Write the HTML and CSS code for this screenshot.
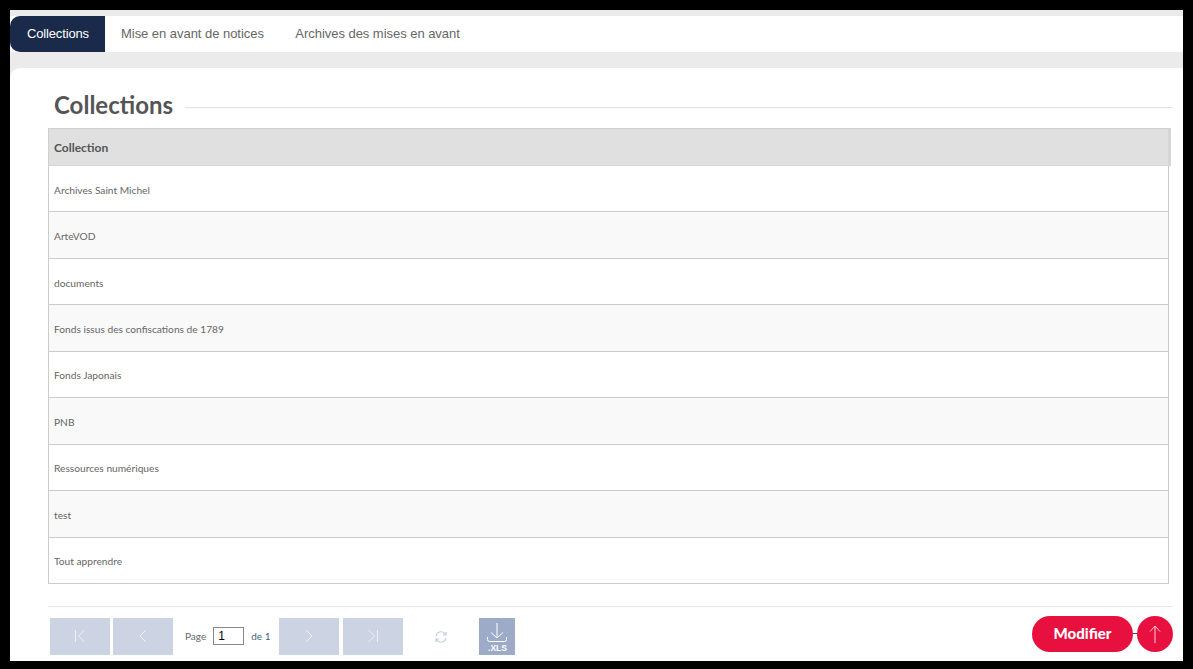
FILE: index.html
```html
<!DOCTYPE html>
<html lang="fr">
<head>
  <meta charset="UTF-8">
  <title>Collections</title>
  <link rel="stylesheet" href="styles.css">
</head>
<body>
  <div class="frame">
    <!-- onglets -->
    <nav class="tabs">
      <a class="tab active">Collections</a>
      <a class="tab">Mise en avant de notices</a>
      <a class="tab">Archives des mises en avant</a>
    </nav>

    <main class="card">
      <div class="title-row">
        <h1>Collections</h1>
        <span class="title-line"></span>
      </div>

      <div class="grid-head"><span>Collection</span></div>
      <div class="grid-body">
        <div class="grid-row">Archives Saint Michel</div>
        <div class="grid-row">ArteVOD</div>
        <div class="grid-row">documents</div>
        <div class="grid-row">Fonds issus des confiscations de 1789</div>
        <div class="grid-row">Fonds Japonais</div>
        <div class="grid-row">PNB</div>
        <div class="grid-row">Ressources numériques</div>
        <div class="grid-row">test</div>
        <div class="grid-row">Tout apprendre</div>
      </div>

      <!-- pagination -->
      <div class="pager">
        <button class="page-btn">
          <svg width="12" height="14" viewBox="0 0 12 14"><path d="M1.500 1v12M10.500 1l-6 6 6 6"/></svg>
        </button>
        <button class="page-btn">
          <svg width="8" height="14" viewBox="0 0 8 14"><path d="M7 1L1 7l6 6"/></svg>
        </button>
        <span class="page-label">Page</span>
        <input class="page-input" type="text" value="1">
        <span class="page-total">de 1</span>
        <button class="page-btn">
          <svg width="8" height="14" viewBox="0 0 8 14"><path d="M1 1l6 6-6 6"/></svg>
        </button>
        <button class="page-btn last">
          <svg width="12" height="14" viewBox="0 0 12 14"><path d="M10.500 1v12M1.500 1l6 6-6 6"/></svg>
        </button>
        <svg class="refresh" width="12" height="12" viewBox="0 0 12 12"><path d="M1 5a5 5 0 0 1 8.600-2.600L11 4M11 1v3H8M11 7a5 5 0 0 1-8.600 2.600L1 8M1 11V8h3"/></svg>
        <button class="xls">
          <svg width="20" height="20" viewBox="0 0 20 20"><path d="M10 0v15M4 9.500l6 5.500 6-5.500M.5 14v2.500a2 2 0 0 0 2 2h15a2 2 0 0 0 2-2V14"/></svg>
          <span>.XLS</span>
        </button>
        <div class="actions">
          <button class="modify">Modifier</button>
          <span class="dash"></span>
          <button class="to-top">
            <svg width="12" height="18" viewBox="0 0 12 18"><path d="M6 18V1M1 6.500L6 1l5 5.500"/></svg>
          </button>
        </div>
      </div>
    </main>
  </div>
</body>
</html>
```

FILE: styles.css
```css
/* commun */
html,
body {
  margin: 0;
  padding: 0;
  height: 100%;
  background-color: #000;
  overflow: hidden;
}

body {
  padding: 10px 10px 8px;
  box-sizing: border-box;
  font-family: "Lato", "Liberation Sans", sans-serif;
  color: #666;
}

.frame {
  height: 651px;
  padding-top: 6px;
  box-sizing: border-box;
  background-color: #ebebeb;
  overflow: hidden;
}

/* onglets */
.tabs {
  display: flex;
  height: 36px;
  background-color: #fff;
  font-family: "Liberation Sans", sans-serif;
  font-size: 13px;
  letter-spacing: -0.04px;
}

.tab {
  display: flex;
  align-items: center;
  padding: 0 15.500px 2px 16px;
  color: #666;
}

.tab.active {
  width: 95px;
  box-sizing: border-box;
  padding: 0 0 2px 17px;
  border-radius: 10px 0 0 10px;
  background-color: #1a2a4a;
  color: #fff;
  letter-spacing: -0.15px;
}

/* carte */
.card {
  height: 593px;
  margin-top: 16px;
  padding: 24px 10px 0 38px;
  border-radius: 10px 0 0 0;
  background-color: #fff;
}

.title-row {
  display: flex;
  align-items: center;
  gap: 12px;
  height: 26px;
  margin-left: 6px;
  margin-bottom: 10px;
}

h1 {
  margin: -2px 0 0;
  font-size: 24px;
  font-weight: 700;
  color: #555;
}

.title-line {
  flex: 1;
  height: 1px;
  margin-top: 4px;
  background-color: #e2e2e2;
}

/* tableau */
.grid-head {
  display: flex;
  align-items: center;
  box-sizing: border-box;
  width: 1123px;
  height: 38px;
  padding-left: 5px;
  border-top: 1px solid #d0d0d0;
  border-left: 1px solid #d0d0d0;
  border-right: 3px solid #d6d6d6;
  border-bottom: 1px solid #d6d6d6;
  background-color: #e0e0e0;
  font-size: 12px;
  font-weight: 700;
  color: #555;
}

.grid-body {
  box-sizing: border-box;
  width: 1121px;
  border-left: 1px solid #ccc;
  border-right: 1px solid #ccc;
}

.grid-row {
  display: flex;
  align-items: center;
  box-sizing: border-box;
  height: 46.450px;
  padding: 2px 0 0 5px;
  border-bottom: 1px solid #ccc;
  font-size: 10.200px;
  color: #666;
}

.grid-row:nth-child(even) {
  background-color: #f9f9f9;
}

/* pagination */
.pager {
  display: flex;
  align-items: flex-start;
  margin-top: 22px;
  padding: 11px 0 0 2px;
  border-top: 1px solid #e4e6ee;
  font-size: 10px;
}

.page-btn {
  display: flex;
  align-items: center;
  justify-content: center;
  width: 60px;
  height: 37px;
  margin-right: 3px;
  padding: 0;
  border: none;
  background-color: #ccd4e3;
}

.page-btn.last {
  margin-left: 1px;
}

.page-btn svg {
  fill: none;
  stroke: #eef1f6;
  stroke-width: 1;
}

.page-label {
  margin: 12px 7px 0 9px;
  color: #666;
}

.page-input {
  box-sizing: border-box;
  width: 31px;
  height: 18px;
  margin-top: 9px;
  padding: 0 0 0 4px;
  border: 1px solid #888;
  font-family: "Liberation Sans", sans-serif;
  font-size: 12px;
  color: #000;
}

.page-total {
  margin: 12px 9px 0 7px;
  color: #3d6480;
}

.refresh {
  margin: 13px 0 0 29px;
  fill: none;
  stroke: #c5cedd;
  stroke-width: 1.200;
}

.xls {
  display: flex;
  flex-direction: column;
  align-items: center;
  width: 36px;
  height: 37px;
  margin-left: 32px;
  padding: 5px 0 0;
  border: none;
  background-color: #9dabc8;
  color: #fff;
  font-family: "Liberation Sans", sans-serif;
  font-size: 8.500px;
  font-weight: 700;
  line-height: 10px;
}

.xls svg {
  fill: none;
  stroke: #fff;
  stroke-width: 1;
}

/* actions */
.actions {
  display: flex;
  align-items: center;
  margin-left: auto;
  margin-top: -2px;
}

.modify {
  width: 101px;
  height: 36px;
  padding: 0 0 2px;
  border: none;
  border-radius: 18px;
  background-color: #e8103f;
  color: #fff;
  font-family: "Lato", sans-serif;
  font-size: 15px;
  font-weight: 900;
}

.dash {
  width: 4px;
  height: 1px;
  background-color: #555;
}

.to-top {
  display: flex;
  align-items: center;
  justify-content: center;
  width: 36px;
  height: 36px;
  padding: 0;
  border: none;
  border-radius: 50%;
  background-color: #e8103f;
}

.to-top svg {
  fill: none;
  stroke: #fbd0da;
  stroke-width: 1;
}
```
